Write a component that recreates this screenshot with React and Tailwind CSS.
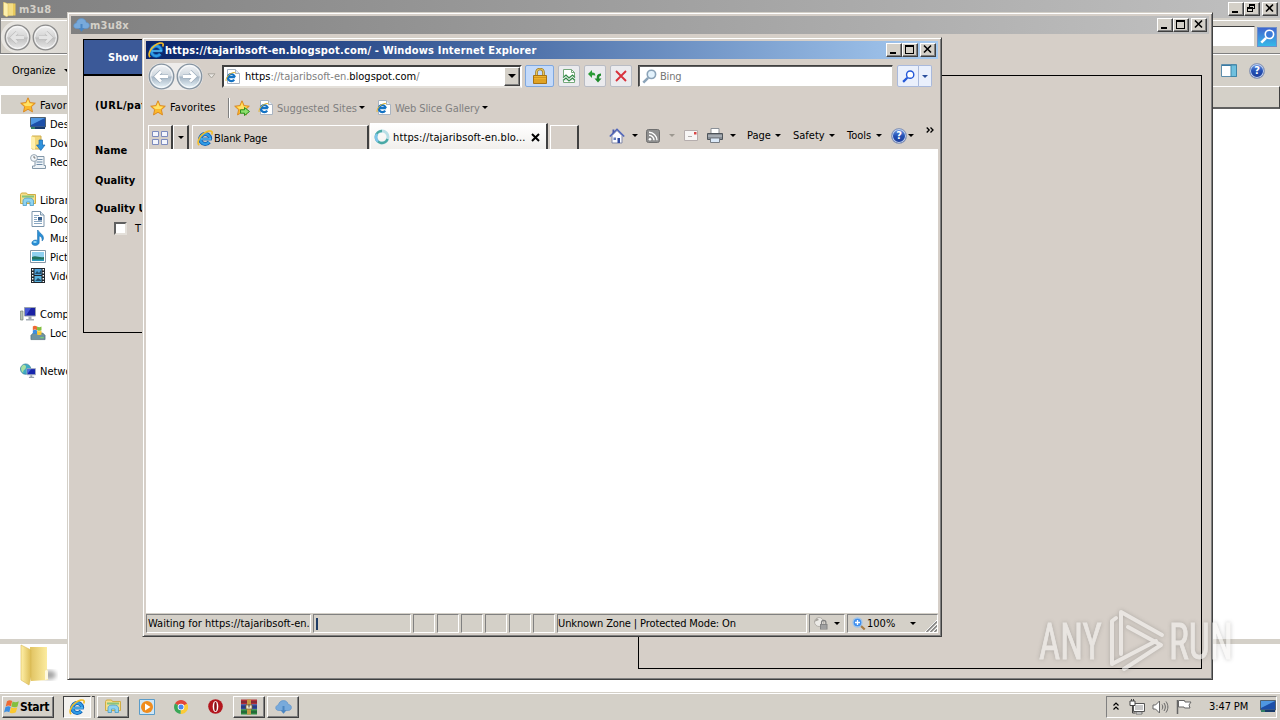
import clsx from "clsx";

/* ---------- small drawings ---------- */

function Caret({ className, color = "#000" }) {
  return (
    <svg className={clsx("shrink-0", className)} width="6" height="3" viewBox="0 0 6 3">
      <path d="M0 0h6L3 3z" fill={color} />
    </svg>
  );
}

function IELogo({ size = 16, className }) {
  return (
    <svg className={clsx("shrink-0", className)} width={size} height={size} viewBox="0 0 16 16">
      <path d="M13.2 9a5 5 0 1 0-1 3" fill="none" stroke="#0f5cae" strokeWidth="4" />
      <path d="M4 9h10.800" stroke="#0f5cae" strokeWidth="2.800" />
      <path d="M13.2 9a5 5 0 1 0-1 3" fill="none" stroke="#2f9be6" strokeWidth="2.400" />
      <path d="M4 9h10" stroke="#5cc0f5" strokeWidth="1.400" />
      <path d="M2.200 15.200C-.5 13 2 7 6.500 3.700 10 1 14 .2 15 1.900c.4.800.1 1.700-.4 2.600" fill="none" stroke="#f3bd28" strokeWidth="1.600" />
    </svg>
  );
}

function IEPage({ className }) {
  return (
    <svg className={clsx("shrink-0", className)} width="15" height="15" viewBox="0 0 15 15">
      <path d="M2.500.5h8l4 4v10h-12z" fill="#fff" stroke="#a9b4c2" />
      <path d="M10.500.5v4h4" fill="#e6ecf4" stroke="#a9b4c2" />
      <path d="M9.800 8.200a3.500 3.500 0 1 0-.6 2.400M3.500 8.200h6.600" fill="none" stroke="#1473c4" strokeWidth="2.200" />
      <path d="M1.200 12C.3 10 3 5.800 6.500 4.200c2-1 3.600-1 4 .2" fill="none" stroke="#e6b52c" strokeWidth="1" />
    </svg>
  );
}

function Star({ add, className }) {
  return (
    <svg className={clsx("shrink-0", className)} width="16" height="16" viewBox="0 0 16 16">
      <path d="M8 .8l2.100 4.800 5.200.6-3.900 3.500 1.100 5.200L8 12.300l-4.500 2.600 1.100-5.200L.7 6.200l5.200-.6z" fill="#fcb92a" stroke="#d9851c" strokeWidth=".9" />
      <path d="M8 2.500l1.400 3.800 3.800.5-2.700 2.300-5-.2-2.800-2.200 3.700-.4z" fill="#ffe268" />
      {add && <path d="M6.500 9.800h4V7.500l5 4-5 4v-2.300h-4z" fill="#8de06c" stroke="#2b8f22" />}
    </svg>
  );
}

function Cloud({ className, w = 17 }) {
  return (
    <svg className={clsx("shrink-0", className)} width={w} height={(w * 14) / 17} viewBox="0 0 17 14">
      <path d="M4 10.500C1.500 10.500.5 9 .8 7.400 1 6 2.200 5 3.500 5 3.700 2.300 6 .6 8.500.6c2.600 0 4.300 1.700 4.700 3.900 2 0 3.200 1.300 3.200 3s-1.300 3-3.200 3z" fill="#78aadb" stroke="#5f94cb" strokeWidth=".7" />
      <path d="M7.500 6h2v4.300h2l-3 3.400-3-3.400h2z" fill="#4b86c2" />
    </svg>
  );
}

function Folder({ w = 13, h = 15, className }) {
  return (
    <svg className={clsx("shrink-0", className)} width={w} height={h} viewBox="0 0 13 15" preserveAspectRatio="none">
      <path d="M5 1.500h7.500v12H5z" fill="#e9ca5c" />
      <path d="M5 1.500h5v12H5z" fill="#f3dd84" />
      <path d="M.5 0L5 1.800v11.500L4 15 .5 13z" fill="#fdf0ad" stroke="#dcbf5d" strokeWidth=".5" />
    </svg>
  );
}

function BigFolder() {
  return (
    <svg width="42" height="44" viewBox="0 0 42 44">
      <defs>
        <linearGradient id="bf1" x1="0" x2="1"><stop offset="0" stopColor="#fff0a8" /><stop offset="1" stopColor="#dcbc55" /></linearGradient>
        <linearGradient id="bf2" x1="0" x2="1"><stop offset="0" stopColor="#e0c260" /><stop offset="1" stopColor="#fdeea3" /></linearGradient>
        <filter id="bfs"><feGaussianBlur stdDeviation="2" /></filter>
      </defs>
      <ellipse cx="29" cy="31" rx="7" ry="4.500" fill="#000" opacity=".35" filter="url(#bfs)" />
      <path d="M10 3h17v22l1 3v8l-17 1z" fill="url(#bf2)" />
      <path d="M1 1l10 5v27l-2 8-8-5z" fill="url(#bf1)" stroke="#d8b956" strokeWidth=".6" />
      <path d="M25 27c1-2 3-1 3 1v7l-3 1z" fill="#fff9df" />
    </svg>
  );
}

function Libraries({ className }) {
  return (
    <svg className={clsx("shrink-0", className)} width="16" height="15" viewBox="0 0 16 15">
      <path d="M.5 2.500l1-1.500h5l1 1.500h8v9H.5z" fill="#f6df8b" stroke="#d0ac43" />
      <path d="M2 3.500h12v2H2z" fill="#86c47c" />
      <path d="M3 13.500V9c0-2 1.500-3 5-3s5.500 1 5.500 3v4.500H10V10H6.500v3.500z" fill="#8fd3f0" stroke="#4a9cc8" strokeWidth=".8" />
    </svg>
  );
}

function Monitor({ className }) {
  return (
    <svg className={clsx("shrink-0", className)} width="16" height="13" viewBox="0 0 16 13">
      <path d="M.5.5h15v9.500H.5z" fill="#1c4fa8" stroke="#52626f" />
      <path d="M1 1h14L1 8z" fill="#4f97e2" />
      <path d="M1 10h14v2H1z" fill="#173a6a" />
      <path d="M1 10.500h4v1H1z" fill="#4fc060" />
    </svg>
  );
}

function Downloads() {
  return (
    <svg width="16" height="16" viewBox="0 0 16 16">
      <path d="M2 1h9v13H2z" fill="#f2d87a" stroke="#cfad4c" />
      <path d="M1 1l4 1.500V15l-4-2z" fill="#fff0ae" />
      <path d="M9 5h3.500v5H15l-4.200 5.500L6.500 10H9z" fill="#2f92dd" stroke="#1566aa" strokeWidth=".7" />
    </svg>
  );
}

function Recent() {
  return (
    <svg width="16" height="16" viewBox="0 0 16 16">
      <path d="M5 2.500h9v9h1.500v3h-13V12H5z" fill="#eef3f7" stroke="#8397a8" />
      <path d="M6.500 5.500h6M6.500 8h6M6.500 10.500h6" stroke="#6f8ca8" />
      <circle cx="4" cy="4" r="3.400" fill="#f5f8fb" stroke="#98a6b2" />
      <path d="M4 2v2h1.500" fill="none" stroke="#555" strokeWidth=".8" />
    </svg>
  );
}

function Documents() {
  return (
    <svg width="14" height="16" viewBox="0 0 14 16">
      <path d="M1 .5h8.500l3.500 3.500v11.500H1z" fill="#fff" stroke="#7c95ab" />
      <path d="M9.500.5V4H13" fill="#dce7f0" stroke="#7c95ab" />
      <path d="M3 4.500h5M3 6.500h3M3 8.500h3M3 10.500h8M3 12.500h8" stroke="#89a7c2" />
      <path d="M7 6h4v3.500H7z" fill="#335c8a" />
    </svg>
  );
}

function Music() {
  return (
    <svg width="14" height="16" viewBox="0 0 14 16">
      <path d="M7 0c.6 2.800 5.500 4 5.500 8 0 1.500-.7 2.500-1.500 3 .6-3-1-4.500-2.800-5v6.500c0 1.600-1.700 3-4 3-2 0-3.400-1-3.400-2.500S2.400 10 4.700 10c.8 0 1.500.2 1.800.5V0z" fill="#2a8fd6" stroke="#1769a8" strokeWidth=".5" />
      <ellipse cx="4" cy="12" rx="1.800" ry="1" fill="#9bdcf8" />
    </svg>
  );
}

function Pictures() {
  return (
    <svg width="16" height="13" viewBox="0 0 16 13">
      <path d="M.5.5h15v12H.5z" fill="#fff" stroke="#8697a6" />
      <path d="M2 2h12v9H2z" fill="#8fd0ef" />
      <path d="M2 7c4-2 7 1 12 0v4H2z" fill="#22735f" />
      <path d="M2 9.500h12V11H2z" fill="#2a9ac0" />
    </svg>
  );
}

function Videos() {
  return (
    <svg width="14" height="15" viewBox="0 0 14 15">
      <path d="M0 0h14v15H0z" fill="#20262c" />
      <path d="M3.500 1h7v6h-7z" fill="#4b9fd8" />
      <path d="M3.500 8h7v6h-7z" fill="#58b2df" />
      <path d="M4 6l2-3 2 2 2-3v4zM4 13l3-3 3 2v1z" fill="#224f6c" />
      <path d="M1.700 1v13M12.300 1v13" stroke="#fff" strokeWidth="1.400" strokeDasharray="1.500 1.500" />
    </svg>
  );
}

function Computer() {
  return (
    <svg width="16" height="14" viewBox="0 0 16 14">
      <path d="M.5 4h2.500v9H.5z" fill="#b9c4b2" stroke="#77847a" strokeWidth=".7" />
      <path d="M4.500.5h11v8.500h-11z" fill="#1a22a4" stroke="#9aa3ad" />
      <path d="M5 1h6L6 8.500H5z" fill="#4556d4" />
      <path d="M8.500 9.500h3V12H14v1.500H6V12h2.500z" fill="#a5adb5" />
    </svg>
  );
}

function Flag({ size = 16 }) {
  return (
    <svg className="shrink-0" width={size} height={size} viewBox="0 0 16 16">
      <path d="M3 2.300c2-1.300 3.500-1.200 5.200-.2L6.900 7.300c-1.500-1-3.200-1-5.200.1z" fill="#ee6a33" />
      <path d="M8.600 2.500c2 1 3.700 1 6.200-.2L13.500 7.400c-2.200 1.200-4 1.200-6.200.2z" fill="#83bf3f" />
      <path d="M1.500 8.100c2-1.200 3.700-1.200 5.200-.2L5.300 13.300c-1.500-1-3.300-1-5.300.2z" fill="#3b8ee2" />
      <path d="M7.100 8.300c2 1 3.900 1 6.200-.1L11.900 13.300c-2.200 1.300-4.100 1.300-6.200.4z" fill="#fbc830" />
    </svg>
  );
}

function LocalDisk() {
  return (
    <svg width="17" height="16" viewBox="0 0 17 16">
      <path d="M1 10.500L3.500 8h10L16 10.500V15H1z" fill="#6f93a0" stroke="#4a6a76" strokeWidth=".7" />
      <path d="M11 12.500h3.500v1H11z" fill="#7be36a" />
      <path d="M3 1c1.500-1 2.800-.8 4.500 0v4c-1.700-.8-3-.8-4.500 0z" fill="#ee6a33" />
      <path d="M7.500 1.200c1.500.8 2.900.8 4.700 0V5c-1.800.8-3.200.8-4.700 0z" fill="#83bf3f" />
      <path d="M3 5.300c1.500-1 2.800-.8 4.500 0V9c-1.700-.8-3-.8-4.500 0z" fill="#3b8ee2" />
      <path d="M7.500 5.600c1.500.8 2.900.8 4.700 0v4c-1.800.8-3.200.8-4.700 0z" fill="#fbc830" />
    </svg>
  );
}

function Network() {
  return (
    <svg width="17" height="16" viewBox="0 0 17 16">
      <circle cx="6" cy="6" r="5.500" fill="#3eaac4" stroke="#2b7590" strokeWidth=".7" />
      <path d="M3 2c3-1 4 1 3 3S3 7 3.500 10C1 9 0 4 3 2z" fill="#a9e0a0" />
      <path d="M7.500 5.500h9V12h-9z" fill="#1726ad" stroke="#a7afc0" />
      <path d="M8 6h4l-4 5z" fill="#4a68e0" />
      <path d="M11 12.500h2v1.500h2v1.500H9.500V14H11z" fill="#98a2ac" />
    </svg>
  );
}

function Help({ size = 16, className }) {
  return (
    <span className={clsx("flex shrink-0 items-center justify-center rounded-full border border-[#8d99b5] bg-linear-to-b from-[#6f9ae6] via-[#2450b4] to-[#1c3b97] text-[11px] font-bold leading-none text-white shadow-[inset_0_0_0_1px_#c3d2ee]", className)} style={{ width: size, height: size }}>
      ?
    </span>
  );
}

function NavButton({ dir, dim, className }) {
  return (
    <svg className={clsx("shrink-0", className)} width="27" height="27" viewBox="0 0 27 27">
      <defs>
        <linearGradient id={dim ? "nbd" : "nb"} x1="0" y1="0" x2="0" y2="1">
          <stop offset="0" stopColor={dim ? "#f1f1f1" : "#f4f6f8"} />
          <stop offset=".48" stopColor={dim ? "#d4d4d4" : "#cfd7de"} />
          <stop offset=".52" stopColor={dim ? "#bfbfbf" : "#a5b5c4"} />
          <stop offset="1" stopColor={dim ? "#ececec" : "#eef9fe"} />
        </linearGradient>
      </defs>
      <circle cx="13.500" cy="13.500" r="12.300" fill={dim ? "url(#nbd)" : "url(#nb)"} stroke={dim ? "#8b8b8b" : "#8593a0"} strokeWidth="1.300" />
      <circle cx="13.500" cy="13.500" r="10.800" fill="none" stroke="#fff" strokeWidth="1" opacity=".8" />
      <g transform={dir === "right" ? "translate(27 0) scale(-1 1)" : undefined}>
        <path d="M20 13.500H8.500M13 8.500l-5 5 5 5" fill="none" stroke={dim ? "#bdbdbd" : "#9aabbb"} strokeWidth="4" />
        <path d="M20 13.500H8.500M13 8.500l-5 5 5 5" fill="none" stroke={dim ? "#e4e4e4" : "#fff"} strokeWidth="2.800" />
      </g>
    </svg>
  );
}

function Magnifier({ size = 14, stroke = "#2a5fd0", fill = "#fff", className }) {
  return (
    <svg className={clsx("shrink-0", className)} width={size} height={size} viewBox="0 0 14 14">
      <path d="M5.700 8.300L1.200 12.800" stroke={stroke} strokeWidth="2.400" />
      <circle cx="8.800" cy="5" r="3.900" fill={fill} stroke={stroke} strokeWidth="1.500" />
    </svg>
  );
}

/* ---------- window chrome ---------- */

const raised = "border border-t-white border-l-white border-r-[#404040] border-b-[#404040] bg-[#d4d0c8] shadow-[inset_-1px_-1px_#808080]";
const inset = "border border-t-[#808080] border-l-[#808080] border-r-white border-b-white";

function CaptionButton({ kind, className }) {
  return (
    <span className={clsx(raised, "flex h-[14px] w-4 shrink-0 items-center justify-center", className)}>
      <svg width="12" height="11" viewBox="0 0 12 11" fill="none" stroke="#000" shapeRendering="crispEdges">
        {kind === "min" && <path d="M2 9h6" strokeWidth="2" />}
        {kind === "max" && <path d="M1.500 2v7.500h8V2M1 2h9" strokeWidth="1" />}
        {kind === "max" && <path d="M1 2h9" strokeWidth="2" />}
        {kind === "restore" && <path d="M3.500 4V1.500h5v4H7M1.500 4.500h5v4h-5zM3 2h6M1 5h6" />}
        {kind === "close" && <path d="M2 1.500l7 7M9 1.500l-7 7" strokeWidth="1.600" shapeRendering="auto" />}
      </svg>
    </span>
  );
}

function CaptionButtons({ middle = "max" }) {
  return (
    <div className="ml-auto flex items-center pb-px pr-0.5">
      <CaptionButton kind="min" />
      <CaptionButton kind={middle} />
      <CaptionButton kind="close" className="ml-0.5" />
    </div>
  );
}

/* ---------- explorer in the background ---------- */

const tree = [
  { label: "Desktop", icon: <Monitor /> },
  { label: "Downloads", icon: <Downloads /> },
  { label: "Recent Places", icon: <Recent /> },
  null,
  { label: "Libraries", icon: <Libraries />, root: true },
  { label: "Documents", icon: <Documents /> },
  { label: "Music", icon: <Music /> },
  { label: "Pictures", icon: <Pictures /> },
  { label: "Videos", icon: <Videos /> },
  null,
  { label: "Computer", icon: <Computer />, root: true },
  { label: "Local Disk", icon: <LocalDisk /> },
  null,
  { label: "Network", icon: <Network />, root: true },
];

function Explorer() {
  return (
    <section className="absolute inset-x-0 top-0 flex h-[692px] flex-col bg-white">
      <header className="flex h-[18px] shrink-0 items-center bg-linear-to-r from-[#808080] to-[#c0c0c0] pl-[3px]">
        <Folder />
        <span className="ml-[3px] font-bold tracking-[0.3px] text-[#d4d0c8]">m3u8</span>
        <CaptionButtons middle="restore" />
      </header>
      <div className="flex h-9 shrink-0 items-center border-b border-l border-b-[#808080] border-l-[#808080] bg-[#d4d0c8] shadow-[inset_0_2px_#d4d0c8,inset_0_3px_#fff]">
        <div className="mt-[3px] flex h-[32px] w-[66px] items-center rounded-l-full bg-linear-to-r from-[#e9e7e3] to-[#dcd9d3] pl-[3px]">
          <NavButton dim />
          <NavButton dim dir="right" className="ml-px" />
        </div>
        <div className="ml-auto mr-0.5 mt-0.5 h-[21px] w-[60px] border border-t-[#404040] border-r-[#d4d0c8] border-b-[#d4d0c8] bg-white" />
        <span className="mr-[3px] mt-0.5 flex size-5 items-center justify-center border border-[#6f8fc8] bg-linear-to-b from-[#3f66cf] to-[#35b8e8]">
          <Magnifier size={15} stroke="#fff" fill="#3a7ad8" />
        </span>
      </div>
      <div className="flex h-8 shrink-0 items-center border-t border-white bg-[#d4d0c8] pl-3">
        <span className="tracking-[-0.1px]">Organize</span>
        <Caret className="ml-2" />
        <svg className="ml-auto" width="16" height="13" viewBox="0 0 16 13">
          <path d="M.5.5h15v12H.5z" fill="#fff" stroke="#5d8dab" />
          <path d="M1 1.500h14" stroke="#3a7ba4" />
          <path d="M10 1h5.500v11.500H10z" fill="#6fc0de" stroke="#3f86a8" />
        </svg>
        <Help className="ml-[12px] mr-[15px]" />
      </div>
      <div className="flex min-h-0 flex-1 justify-between overflow-hidden">
        <nav className="w-[67px] overflow-hidden pt-[9px]">
          <div className="ml-px flex h-[19px] items-center bg-[#d4d0c8] pl-[19px]">
            <Star />
            <span className="ml-1 pt-px">Favorites</span>
          </div>
          {tree.map((row, i) =>
            row ? (
              <div key={row.label} className={clsx("flex h-[19px] items-center", row.root ? "pl-5" : "pl-[30px]")}>
                <span className="flex w-4 shrink-0 justify-center">{row.icon}</span>
                <span className="ml-1 pt-0.5">{row.label}</span>
              </div>
            ) : (
              <div key={i} className="h-[19px]" />
            )
          )}
        </nav>
        <div className="h-[23px] w-[100px] border-t border-r border-b-2 border-t-white border-r-[#404040] border-b-[#606060] bg-[#d4d0c8]" />
      </div>
      <footer className="h-[53px] shrink-0 border-t-[5px] border-[#d4d0c8] pl-5">
        <BigFolder />
      </footer>
    </section>
  );
}

/* ---------- m3u8x ---------- */

function Downloader() {
  return (
    <section className="absolute left-[67px] top-3 flex h-[668px] w-[1146px] flex-col border border-t-[#d4d0c8] border-l-[#d4d0c8] border-r-[#404040] border-b-[#404040] bg-[#d6cfc8] shadow-[inset_1px_1px_#fff,inset_-1px_-1px_#808080]">
      <header className="mx-[3px] mt-[3px] flex h-[18px] shrink-0 items-center bg-linear-to-r from-[#808080] to-[#c0c0c0] pl-0.5">
        <Cloud />
        <span className="font-bold tracking-[0.3px] text-[#d4d0c8]">m3u8x</span>
        <CaptionButtons />
      </header>
      <div className="flex flex-1 items-start pl-[15px] pr-[10px] pt-[5px]">
        <div className="h-[294px] w-[540px] border border-black font-bold">
          <div className="flex h-9 items-center border-b-2 border-black bg-[#3b5998] pl-6 pt-px text-white">Show</div>
          <div className="flex flex-col pl-[11px] leading-4">
            <span className="mt-[22px] tracking-[0.35px]">(URL/path)</span>
            <span className="mt-[29px] tracking-[0.1px]">Name</span>
            <span className="mt-[14px]">Quality</span>
            <span className="mt-[12px]">Quality URL</span>
            <span className="mt-[3px] flex items-center pl-[19px] font-normal">
              <i className="size-[13px] border-2 border-t-[#606060] border-l-[#606060] border-r-[#e4e0da] border-b-[#e4e0da] bg-white" />
              <span className="ml-[8px] pt-px">T</span>
            </span>
          </div>
        </div>
        <div className="ml-auto mt-9 h-[594px] w-[564px] border border-black" />
      </div>
    </section>
  );
}

/* ---------- Internet Explorer ---------- */

function ToolButton({ children, width = "w-[22px]", tone = "border-[#b9bcc4] bg-[#ebebee]", className }) {
  return (
    <span className={clsx("flex h-[22px] shrink-0 items-center justify-center rounded-[2px] border", width, tone, className)}>
      {children}
    </span>
  );
}

function AddressRow() {
  return (
    <div className="flex h-[34px] shrink-0 items-center pl-0.5">
      <div className="flex items-center rounded-full bg-[#eeecea]">
        <NavButton />
        <NavButton dir="right" className="ml-px" />
      </div>
      <svg className="ml-1 shrink-0" width="9" height="6" viewBox="0 0 9 6">
        <path d="M1 .8h7L4.500 5z" fill="#e8e6e2" stroke="#aaa69e" />
      </svg>
      <div className="ml-1.5 flex h-[23px] w-[300px] shrink-0 items-center border-2 border-t-[#404040] border-l-[#404040] border-r-white border-b-[#e4e0da] bg-white pl-px">
        <IEPage />
        <span className="ml-[5px] pt-px tracking-[-0.02px]">https<span className="text-[#808080]">://tajaribsoft-en.</span>blogspot.com<span className="text-[#808080]">/</span></span>
        <span className={clsx(raised, "ml-auto flex h-[19px] w-4 items-center justify-center")}>
          <svg width="8" height="4" viewBox="0 0 8 4"><path d="M0 0h8L4 4z" /></svg>
        </span>
      </div>
      <ToolButton width="w-[29px]" tone="border-[#7fa8df] bg-[#c4dafa]" className="ml-[3px]">
        <svg width="14" height="16" viewBox="0 0 14 16">
          <path d="M3.500 8V4.500a3.500 3.500 0 0 1 7 0V8" fill="none" stroke="#9a7420" strokeWidth="2.600" />
          <path d="M3.500 8V4.500a3.500 3.500 0 0 1 7 0V8" fill="none" stroke="#e8c75c" strokeWidth="1.200" />
          <path d="M.5 7.500h13v8H.5z" fill="#eeb32c" stroke="#a77315" />
          <path d="M1 9.500h12M1 12h12M1 14h12" stroke="#c98c1d" strokeWidth=".8" />
        </svg>
      </ToolButton>
      <ToolButton className="ml-1">
        <svg width="14" height="16" viewBox="0 0 14 16" fill="none">
          <path d="M1.500 8V1.500h8l3 3V8M1.500 13v1.500h11V13" fill="#fff" stroke="#75a87b" />
          <path d="M9.500 1.500v3h3" stroke="#75a87b" />
          <path d="M1 9.500L4 7l3 3 3.500-3L13 9.500M1 12.500L4 10l3 3 3.500-3 2.500 2.500" stroke="#2f8b43" strokeWidth="1.100" />
        </svg>
      </ToolButton>
      <ToolButton className="ml-1">
        <svg width="14" height="14" viewBox="0 0 14 14">
          <path d="M0 5L4 1v2.500c2.700 0 3.500 1 3.200 3.500C6.500 6.200 6 6.200 4 6.200V9z" fill="#2a9b35" />
          <path d="M10 13.500L6.500 9.500h2.300C8.700 6.500 9 5 13 4.500v2.300c-1.500.2-1.800.7-1.800 2.700h2.300z" fill="#1f8a2b" />
        </svg>
      </ToolButton>
      <ToolButton className="ml-1">
        <svg width="14" height="14" viewBox="0 0 14 14">
          <path d="M2 2l10 10M12 2L2 12" stroke="#d8313c" strokeWidth="1.900" />
        </svg>
      </ToolButton>
      <div className="ml-1.5 flex h-[22px] w-[255px] shrink-0 items-center border border-t-[#404040] border-l-[#404040] border-r-[#d4d0c8] border-b-[#d4d0c8] bg-white pl-[3px] shadow-[inset_1px_1px_#606060]">
        <Magnifier size={15} stroke="#8ba3b8" fill="#e3f2fc" />
        <span className="ml-[3px] pt-px tracking-[-0.2px] text-[#757575]">Bing</span>
      </div>
      <ToolButton tone="border-[#a9b9dc] bg-[#eaf0fc]" className="ml-1 rounded-r-none"><Magnifier size={13} stroke="#2458d8" /></ToolButton>
      <ToolButton width="w-[13px]" tone="border-[#a9b9dc] bg-[#eaf0fc]" className="rounded-l-none border-l-0"><Caret color="#2b4f9c" /></ToolButton>
    </div>
  );
}

function FavoritesRow() {
  return (
    <div className="flex h-[29px] shrink-0 items-center pl-1 text-[#808080]">
      <Star />
      <span className="ml-[4px] w-[46px] tracking-[0.1px] text-black">Favorites</span>
      <i className="ml-[12px] h-5 w-px bg-[#808080] shadow-[1px_0_#fff]" />
      <Star add className="ml-[5px]" />
      <IEPage className="ml-2" />
      <span className="ml-[4px] w-[80px] pt-px">Suggested Sites</span>
      <Caret className="ml-[2px]" />
      <IEPage className="ml-[11px]" />
      <span className="ml-[4px] w-[84px] pt-px tracking-[-0.1px]">Web Slice Gallery</span>
      <Caret className="ml-[3px]" />
    </div>
  );
}

const tabEdge = "border-t border-l border-r-2 border-t-white border-l-white border-r-[#404040]";

function TabRow() {
  return (
    <div className="flex h-[27px] shrink-0 items-end pl-[2px]">
      <span className={clsx(tabEdge, "flex h-6 w-[25px] items-center justify-center")}>
        <svg width="16" height="14" viewBox="0 0 16 14" fill="#f3f5fd" stroke="#7d8bbd">
          <path d="M.5.5h6v5h-6zM9.500.5h6v5h-6zM.5 8.500h6v5h-6zM9.500 8.500h6v5h-6z" />
        </svg>
      </span>
      <span className={clsx(tabEdge, "flex h-6 w-4 items-center justify-center")}><Caret /></span>
      <div className={clsx(tabEdge, "ml-[3px] flex h-6 w-[177px] items-center pl-1")}>
        <IELogo />
        <span className="ml-px pt-px tracking-[-0.15px]">Blank Page</span>
      </div>
      <div className={clsx(tabEdge, "ml-px flex h-[26px] w-[178px] items-center bg-linear-to-b from-white to-[#f1efec] pl-[3px]")}>
        <svg className="shrink-0" width="16" height="16" viewBox="0 0 16 16" fill="none">
          <circle cx="8" cy="8" r="6" stroke="#b9dfe6" strokeWidth="3" />
          <path d="M8 2a6 6 0 1 0 5.500 8" stroke="#4aa9a5" strokeWidth="2.400" />
          <path d="M3 5a6 6 0 0 0 1 7.500" stroke="#7dc4ea" strokeWidth="2.600" />
        </svg>
        <span className="ml-[3px] w-[134px] pt-px tracking-[0.12px]">https://tajaribsoft-en.blo...</span>
        <svg className="ml-[4px] mt-0.5 shrink-0" width="9" height="9" viewBox="0 0 9 9"><path d="M1 1l7 7M8 1L1 8" stroke="#000" strokeWidth="2" /></svg>
      </div>
      <div className={clsx(tabEdge, "ml-[2px] h-6 w-[29px]")} />
      <div className="flex h-[27px] flex-1 items-center pl-[30px]">
        <svg className="shrink-0" width="16" height="16" viewBox="0 0 16 16">
          <path d="M3 7.500v7.500h10V7.500L8 2.500z" fill="#fbfbff" stroke="#8289a8" />
          <path d="M.8 8.500L8 1.300l7.200 7.200" fill="none" stroke="#4e64bb" strokeWidth="1.600" />
          <path d="M3.500 1.500h1.800V4L3.500 5.500z" fill="#4b5aa8" />
          <path d="M8.500 10h2.500v5H8.500z" fill="#2f4aa0" /><path d="M4.500 9.500h2.500V12H4.500z" fill="#5f78b8" />
        </svg>
        <Caret className="ml-[7px]" />
        <svg className="ml-2 shrink-0" width="14" height="14" viewBox="0 0 14 14">
          <rect x=".5" y=".5" width="13" height="13" rx="2" fill="#8e8e8e" stroke="#6f6f6f" />
          <circle cx="4" cy="10.200" r="1.300" fill="#fff" />
          <path d="M3 6.200a5 5 0 0 1 5 5M3 3.300a8 8 0 0 1 8 8" fill="none" stroke="#fff" strokeWidth="1.400" />
        </svg>
        <Caret className="ml-[9px]" color="#9c9890" />
        <svg className="ml-[9px] shrink-0" width="14" height="11" viewBox="0 0 14 11">
          <path d="M.5.5h13v10H.5z" fill="#f7f5f5" stroke="#b5adad" />
          <path d="M10 2h2.500v2.500H10z" fill="#d84545" /><path d="M4 6.500h4" stroke="#b0acac" />
        </svg>
        <svg className="ml-[9px] shrink-0" width="16" height="15" viewBox="0 0 16 15">
          <path d="M4 .5h8V6H4z" fill="#fff" stroke="#8b9097" />
          <path d="M.5 5.500h15v6H.5z" fill="#878d94" stroke="#4e545a" />
          <path d="M1 8h14" stroke="#c5cbd1" />
          <path d="M3.500 10h9v4.500h-9z" fill="#dbe9f8" stroke="#767c84" />
        </svg>
        <Caret className="ml-[7px]" />
        <span className="ml-[11px] w-[25px]">Page</span>
        <Caret className="ml-[3px]" />
        <span className="ml-3 w-[33px]">Safety</span>
        <Caret className="ml-[3px]" />
        <span className="ml-3 w-[27px]">Tools</span>
        <Caret className="ml-[2px]" />
        <Help className="ml-[9px]" />
        <Caret className="ml-px" />
        <svg className="-mt-3 ml-[12px] shrink-0" width="8" height="6" viewBox="0 0 8 6" fill="none" stroke="#000" strokeWidth="1.300">
          <path d="M.7.5L3.200 3 .7 5.500M4.500.5L7 3 4.500 5.500" />
        </svg>
      </div>
    </div>
  );
}

function StatusBar() {
  return (
    <div className="flex h-5 shrink-0 items-end bg-[#d4d0c8] leading-[18px]">
      <span className={clsx(inset, "h-[19px] w-[165px] overflow-hidden pl-px")}>Waiting for https://tajaribsoft-en.</span>
      <span className={clsx(inset, "ml-[2px] flex h-[19px] w-[98px] items-center pl-0.5")}>
        <i className="h-3 w-0.5 bg-[#1f3d66]" />
      </span>
      {[0, 1, 2, 3, 4, 5].map((n) => (
        <span key={n} className={clsx(inset, "ml-0.5 h-[19px] w-[22px]")} />
      ))}
      <span className={clsx(inset, "ml-0.5 h-[19px] w-[250px] tracking-[-0.12px]")}>Unknown Zone | Protected Mode: On</span>
      <span className={clsx(inset, "ml-0.5 flex h-[19px] w-9 items-center pl-[3px]")}>
        <svg width="16" height="15" viewBox="0 0 16 15">
          <circle cx="6" cy="6" r="4.500" fill="#eceae6" stroke="#b4b0aa" />
          <path d="M1 6l3-4 2 2z" fill="#a5a29c" />
          <path d="M8.500 8V6.500a2.200 2.200 0 0 1 4.400 0V8" fill="none" stroke="#808080" strokeWidth="1.200" />
          <path d="M7 8h7.500v5.500H7z" fill="#858585" /><path d="M8 10h5.500M8 12h5.500" stroke="#bbb" />
        </svg>
        <Caret className="ml-[5px]" />
      </span>
      <span className={clsx(inset, "ml-0.5 flex h-[19px] flex-1 items-center pl-1")}>
        <svg width="14" height="14" viewBox="0 0 14 14">
          <path d="M8.500 8.500l4.200 4" stroke="#a87c43" strokeWidth="2.200" />
          <circle cx="5.500" cy="5.500" r="4.500" fill="#3f8fee" stroke="#9fc4ea" strokeWidth="1.300" />
          <path d="M5.500 3v5M3 5.500h5" stroke="#fff" strokeWidth="1.300" />
        </svg>
        <span className="ml-px w-[31px] pt-px">100%</span>
        <Caret className="ml-[12px]" />
        <svg className="ml-auto mt-auto" width="12" height="12" viewBox="0 0 12 12">
          <path d="M0 12L12 0M4 12l8-8M8 12l4-4" stroke="#fff" />
          <path d="M1.500 12L12 1.500M5.500 12L12 5.500M9.500 12L12 9.500" stroke="#808080" strokeWidth="1.300" />
        </svg>
      </span>
    </div>
  );
}

function Browser() {
  return (
    <section className="absolute left-[142px] top-[37px] h-[600px] w-[800px] border border-t-[#d4d0c8] border-l-[#d4d0c8] border-r-[#404040] border-b-[#404040] bg-[#d6cfc8] p-[3px] shadow-[inset_1px_1px_#fff,inset_-1px_-1px_#808080]">
      <div className="flex h-full flex-col">
        <header className="flex h-[18px] shrink-0 items-center bg-linear-to-r from-[#0a246a] to-[#a6caf0] pl-0.5">
          <IELogo />
          <span className="ml-px font-bold tracking-[0.17px] text-white">https://tajaribsoft-en.blogspot.com/ - Windows Internet Explorer</span>
          <CaptionButtons />
        </header>
        <AddressRow />
        <FavoritesRow />
        <TabRow />
        <main className="flex-1 bg-white" />
        <StatusBar />
      </div>
    </section>
  );
}

/* ---------- taskbar ---------- */

function Task({ children, active, flat, width = "w-8", className }) {
  return (
    <span
      className={clsx(
        "flex h-[22px] items-center justify-center",
        width,
        active && "border border-t-[#404040] border-l-[#404040] border-r-white border-b-white bg-[#f4f2ee]",
        !active && !flat && raised,
        className
      )}
    >
      {children}
    </span>
  );
}

function Taskbar() {
  return (
    <footer className="absolute inset-x-0 bottom-0 flex h-7 items-center border-t border-[#d4d0c8] bg-[#d4d0c8] pl-0.5 shadow-[inset_0_1px_#fff]">
      <span className={clsx(raised, "flex h-[22px] w-[52px] items-center pl-px text-[12px] font-bold tracking-[-0.35px]")}>
        <Flag />
        <span>Start</span>
      </span>
      <Task active width="w-[28px]" className="ml-[9px]"><IELogo /></Task>
      <i className="ml-px h-[22px] w-[3px] border-r border-t border-r-[#808080] border-t-[#404040]" />
      <Task className="ml-[2px]"><Libraries /></Task>
      <Task flat className="ml-[2px]">
        <svg width="16" height="16" viewBox="0 0 16 16">
          <path d="M.5.5h15v15H.5z" fill="#cfe6f6" stroke="#5a9cc9" />
          <circle cx="8" cy="8" r="6" fill="#f08c1d" /><path d="M6 4.500L11.500 8 6 11.500z" fill="#fff" />
        </svg>
      </Task>
      <Task flat className="ml-[2px]">
        <svg width="14" height="14" viewBox="0 0 14 14">
          <path d="M7 7L1 3.500A7 7 0 0 1 13 3.500L13 4.500z" fill="#e2463a" />
          <path d="M7 7l6.100-3.500A7 7 0 0 1 6.500 14z" fill="#fbcb37" />
          <path d="M7 7l-.5 7A7 7 0 0 1 1 3.500z" fill="#3aa757" />
          <circle cx="7" cy="7" r="3.300" fill="#fff" /><circle cx="7" cy="7" r="2.500" fill="#4a87ee" />
        </svg>
      </Task>
      <Task flat className="ml-[2px]">
        <svg width="15" height="15" viewBox="0 0 15 15">
          <circle cx="7.500" cy="7.500" r="7.300" fill="#b3171e" />
          <ellipse cx="7.500" cy="7.500" rx="2.800" ry="5.500" fill="#fff" /><ellipse cx="7.500" cy="7.500" rx="1.300" ry="4.700" fill="#8a1016" />
        </svg>
      </Task>
      <Task className="ml-[2px]">
        <svg width="16" height="16" viewBox="0 0 16 16">
          <path d="M0 .5h16v4.800H0z" fill="#b43038" /><path d="M0 5.300h16v5H0z" fill="#3149a0" /><path d="M0 10.300h16v5.200H0z" fill="#2b8940" />
          <path d="M0 3h16M0 8h16M0 13h16" stroke="#172030" strokeWidth=".6" />
          <path d="M6 .5h4v15H6z" fill="#c59b46" /><path d="M5 6h6v4H5z" fill="#f0ead6" stroke="#7b5c1e" strokeWidth=".7" /><path d="M8 5.500v3" stroke="#444" />
        </svg>
      </Task>
      <Task className="ml-[2px]"><Cloud /></Task>

      <div className={clsx(inset, "ml-auto mr-[3px] flex h-[22px] w-[171px] items-center")}>
        <svg className="ml-[6px]" width="6" height="9" viewBox="0 0 6 9" fill="none" stroke="#000" strokeWidth="1.200"><path d="M.5 3.500L3 1l2.500 2.500M.5 7.500L3 5l2.500 2.500" /></svg>
        <svg className="ml-[10px]" width="16" height="16" viewBox="0 0 16 16">
          <path d="M4.500 4.500h11v8h-11z" fill="#c8c8c8" stroke="#555" /><path d="M5.500 5.500h9v6h-9z" fill="none" stroke="#fff" />
          <path d="M7 13h6v2H7z" fill="#fff" stroke="#555" strokeWidth=".8" />
          <path d="M1 2h5v4.500H1z" fill="#fff" stroke="#444" /><path d="M2.500 0v2M4.500 0v2M3.500 6.500V14H6" fill="none" stroke="#444" />
        </svg>
        <svg className="ml-[7px]" width="17" height="14" viewBox="0 0 17 14" fill="none" stroke="#666">
          <path d="M1 5h2.500L7.500 1v12l-4-4H1z" fill="#fff" />
          <path d="M10 4.500c1 1.500 1 3.500 0 5M12 3c1.800 2.500 1.800 5.500 0 8M14 1.500c2.500 3.500 2.500 7.500 0 11" />
        </svg>
        <svg className="ml-[7px]" width="16" height="15" viewBox="0 0 16 15">
          <path d="M1.500 1v14" stroke="#666" strokeWidth="1.500" />
          <path d="M2.500 1.500h6l.5 1.500h6l-2 3 1 3H8.500L8 8H2.500z" fill="#fff" stroke="#666" />
        </svg>
        <span className="ml-[17px] w-[42px] tracking-[-0.1px]">3:47 PM</span>
        <Monitor className="ml-[9px]" />
      </div>
    </footer>
  );
}

function Watermark() {
  return (
    <div className="absolute left-[1030px] top-[600px] opacity-60">
      <svg width="215" height="80" viewBox="0 0 215 80" style={{ filter: "drop-shadow(0 0 2px rgba(90,90,90,.55))" }}>
        <g fill="#f6f5f3" stroke="#f6f5f3" strokeWidth=".9" fontFamily="Roboto, sans-serif" fontSize="50">
          <text transform="translate(9 59) scale(.66 1)" textLength="95" lengthAdjust="spacingAndGlyphs">ANY</text>
          <text transform="translate(139 59) scale(.66 1)" textLength="97" lengthAdjust="spacingAndGlyphs">RUN</text>
        </g>
        <g fill="none" stroke="#f6f5f3" strokeWidth="4" strokeLinecap="round" strokeLinejoin="round">
          <path d="M91 54V12l41 23" />
          <path d="M98 27l33 18L94 69" />
          <path d="M86 18l-4 3v43l44-23" />
        </g>
      </svg>
    </div>
  );
}

export default function App() {
  return (
    <div className="relative h-[720px] w-[1280px] overflow-hidden whitespace-nowrap bg-white font-['DejaVu_Sans_Condensed','DejaVu_Sans',sans-serif] text-[11px] leading-none text-black [font-stretch:condensed]">
      <Explorer />
      <Downloader />
      <Browser />
      <Taskbar />
      <Watermark />
    </div>
  );
}
